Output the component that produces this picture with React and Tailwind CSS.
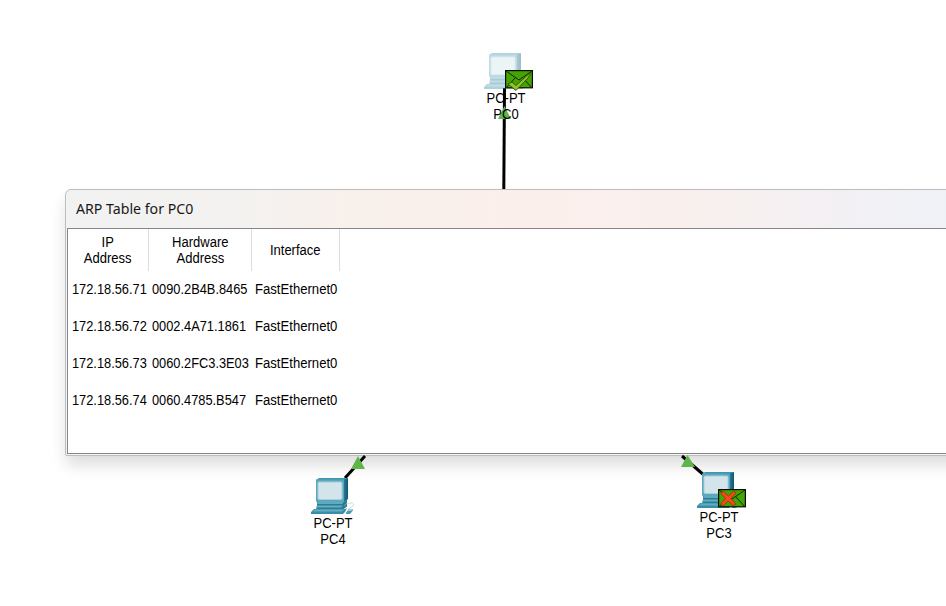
import React from "react";

const rows = [
  ["172.18.56.71", "0090.2B4B.8465", "FastEthernet0"],
  ["172.18.56.72", "0002.4A71.1861", "FastEthernet0"],
  ["172.18.56.73", "0060.2FC3.3E03", "FastEthernet0"],
  ["172.18.56.74", "0060.4785.B547", "FastEthernet0"],
];

function Computer({ faded }) {
  return (
    <g opacity={faded ? 0.4 : 1}>
      <path d="M5 2 8 0H37L33 3H5Z" fill="#3f94ae" />
      <path d="M32 2 37 0V21L32 25Z" fill="url(#monitorSide)" />
      <rect x="5" y="1.5" width="28" height="22.5" rx="1" fill="#5ba7be" />
      <rect x="6.5" y="3.5" width="25" height="18.5" rx="2" fill="#a9cfdc" />
      <rect x="7.5" y="4.5" width="23" height="16.5" rx="1" fill="#d3e4eb" />
      <path d="M6 24H33L36 21.5V25L33 28H6Z" fill="#2c7b95" />
      <path d="M7 23.5H33L31 26H6Z" fill="#5eaac0" />
      <path d="M6 28H33L36 25.5V28.5L32 31.5H5Z" fill="#2b7d97" />
      <path d="M6 27.5H32L30 29.5H5Z" fill="#66afc3" />
      <path d="M3 31H34L36 30L34 34L32 36H0V34Z" fill="#388ea8" />
      <path d="M4 31.5H33L31 33.5H2Z" fill="#65aec2" />
      <path d="M36 26C40 24 44 25 42 28C40 30 37 30 37 32" fill="none" stroke="#cddde3" />
      <path d="M35 34.5 38 31H42L41.5 33 39 36H35Z" fill="#4b9cb2" />
      <path d="M38 31H42L40 33H37Z" fill="#a5ced9" />
    </g>
  );
}

function Envelope({ failed }) {
  return (
    <g>
      <rect x=".6" y=".6" width="26.8" height="17.2" fill="#45a304" stroke="#050b00" strokeWidth="1.2" />
      <path d="M1 1 14 10 27 1M1 18 10 8M27 18 18 8" fill="none" stroke="#102a00" strokeWidth="1" />
      {failed ? (
        <path d="M2.5 4 5.5 2.5 10.5 7 16 2 18 4 13 9.5 18 15 15 16.5 10 12 5 17 2.5 15 7.5 9.5Z" fill="#f8481b" stroke="#8c2d08" strokeWidth=".7" />
      ) : (
        <path d="M3 14 7 12 11 15.5 26.5 1.5 23 8 11 20.5Z" fill="#8fc12a" stroke="#2c5500" strokeWidth=".9" />
      )}
    </g>
  );
}

function Label({ name, className }) {
  return (
    <div className={`absolute w-16 scale-x-[0.93] text-center text-[14px] leading-4 ${className}`}>
      <div>PC-PT</div>
      <div>{name}</div>
    </div>
  );
}

function HeadCell({ children, className }) {
  return (
    <div className={`flex h-[42px] shrink-0 items-center justify-center border-r border-[#dddddd] pb-px text-center ${className}`}>
      <span className="scale-x-[0.93]">{children}</span>
    </div>
  );
}

function Cell({ children, className }) {
  return (
    <div className={`shrink-0 ${className}`}>
      <span className="inline-block origin-left scale-x-[0.915]">{children}</span>
    </div>
  );
}

function ArpWindow() {
  return (
    <section className="absolute left-[65px] top-[189px] flex h-[267px] w-[900px] flex-col rounded-t-[6px] rounded-b-[2px] border border-[#bdbdbd] bg-[#f3f3f3] pl-px pb-px shadow-[0_10px_16px_-1px_rgba(0,0,0,0.14)]">
      <header className="flex h-[38px] shrink-0 items-center rounded-t-[5px] bg-[linear-gradient(90deg,#f2f2f2_0%,#f3f2f0_18%,#f8f0eb_32%,#fbefeb_52%,#f8f0ee_72%,#f3f0f4_86%,#eff2f7_98%)] pb-[2px] pl-[9px] font-['Noto_Sans',sans-serif] text-[14px] text-[#171717]">
        <h1 className="origin-left scale-x-[1.01] whitespace-nowrap">ARP Table for PC0</h1>
      </header>
      <div className="min-h-0 flex-1 border border-[#85858b] bg-white text-[14px] leading-4">
        <div className="flex">
          <HeadCell className="w-[81px]">IP<br />Address</HeadCell>
          <HeadCell className="w-[103px]">Hardware<br />Address</HeadCell>
          <HeadCell className="w-[88px]">Interface</HeadCell>
        </div>
        {rows.map(([ip, hardware, port]) => (
          <div key={ip} className="flex h-[37px] items-center whitespace-nowrap pb-[2px]">
            <Cell className="w-[80px] pl-[3.5px]">{ip}</Cell>
            <Cell className="w-[103px] pl-[4px]">{hardware}</Cell>
            <div className="w-[88px] shrink-0 pl-[3.5px]">
              <span className="inline-block origin-left scale-x-[0.937]">{port}</span>
            </div>
          </div>
        ))}
      </div>
    </section>
  );
}

export default function App() {
  return (
    <main className="relative h-[606px] w-[946px] overflow-hidden bg-white font-['Liberation_Sans',Arial,sans-serif] text-black">
      <ArpWindow />
      <svg className="absolute left-0 top-0" width="946" height="606" viewBox="0 0 946 606">
        <defs>
          <linearGradient id="monitorSide">
            <stop offset="0" stopColor="#2e839d" />
            <stop offset="1" stopColor="#0b5871" />
          </linearGradient>
        </defs>
        <path d="M504.5 88 503.8 189" stroke="#000" strokeWidth="3" />
        <path d="M365 456 345 478M682 456 705 476" stroke="#000" strokeWidth="3" />
        <g fill="#5fb548">
          <path d="M504.5 106 511 119H498Z" />
          <path d="M358 456 365 469H351Z" />
          <path d="M687.5 455 695 467H681Z" />
        </g>
        <g transform="translate(484 53)"><Computer faded /></g>
        <g transform="translate(311 478)"><Computer /></g>
        <g transform="translate(697 472)"><Computer /></g>
        <g transform="translate(505 70)"><Envelope /></g>
        <g transform="translate(718 489)"><Envelope failed /></g>
      </svg>
      <Label name="PC0" className="left-[474px] top-[90px]" />
      <Label name="PC4" className="left-[300.5px] top-[515px]" />
      <Label name="PC3" className="left-[687px] top-[509px]" />
    </main>
  );
}
